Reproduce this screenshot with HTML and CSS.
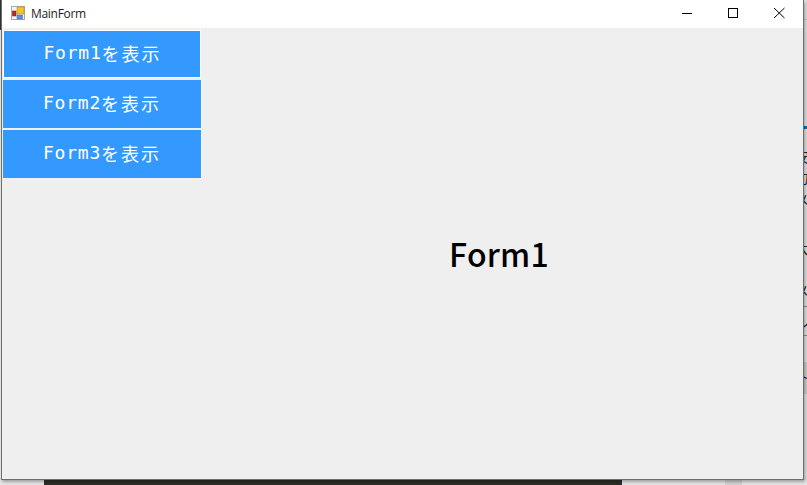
FILE: index.html
```html
<!DOCTYPE html>
<html lang="ja">
<head>
<meta charset="utf-8">
<title>MainForm</title>
<link rel="stylesheet" href="styles.css">
</head>
<body>
<div class="desktop">
  <div class="edge"></div>
  <div class="bottom-page">
    <div class="dark-bar"></div>
    <div class="grey-tab"></div>
  </div>
  <div class="side-page">
    <div class="hr r0"></div>
    <div class="blue-rule"></div>
    <p class="frag f1">安</p>
    <p class="frag f2">力</p>
    <p class="frag f3">メ</p>
    <p class="frag f4">大</p>
    <p class="frag f5">メ</p>
    <div class="hr r1"></div>
    <p class="frag f6">ル</p>
    <div class="hr r2"></div>
    <div class="shade"><p class="frag f7">ト</p></div>
  </div>
  <div class="window">
    <header class="titlebar">
      <svg class="app-icon" width="14" height="14" viewBox="0 0 14 14">
        <rect x="0.5" y="0.5" width="13" height="13" fill="#f4f4f4" stroke="#a8a8a8"/>
        <rect x="6" y="1" width="7" height="7" fill="#f5c32c" stroke="#b98a1a" stroke-width="0.6"/>
        <rect x="1.5" y="5" width="3.500" height="5" fill="#b5291f" stroke="#7d1d16" stroke-width="0.5"/>
        <rect x="6" y="9" width="5.500" height="4" fill="#5b8fe0" stroke="#3c68ad" stroke-width="0.5"/>
      </svg>
      <span class="title">MainForm</span>
      <div class="controls">
        <svg class="ctl" width="46" height="28" viewBox="0 0 46 28"><path d="M18 13.500h10" stroke="#000" fill="none"/></svg>
        <svg class="ctl" width="46" height="28" viewBox="0 0 46 28"><rect x="18.500" y="8.500" width="9" height="9" stroke="#000" fill="none"/></svg>
        <svg class="ctl" width="46" height="28" viewBox="0 0 46 28"><path d="M18 8l10.500 10M28.500 8l-10.500 10" stroke="#000" fill="none"/></svg>
      </div>
    </header>
    <main class="client">
      <nav class="menu">
        <button class="btn btn-focus"><span class="lat">Form1</span><span class="cjk">を表示</span></button>
        <button class="btn"><span class="lat">Form2</span><span class="cjk">を表示</span></button>
        <button class="btn"><span class="lat">Form3</span><span class="cjk">を表示</span></button>
      </nav>
      <section class="panel"><span class="heading">Form1</span></section>
    </main>
  </div>
</div>
</body>
</html>
```
FILE: styles.css
```css
* { box-sizing: border-box; }
html, body { margin: 0; padding: 0; }
body { width: 807px; height: 485px; overflow: hidden; background: #efefef; }
.desktop { position: relative; width: 807px; height: 485px; overflow: hidden; background: #ececec; }
.edge { position: absolute; left: 0; top: 0; width: 1px; height: 30px; background: #333; }
.bottom-page { position: absolute; left: 0; right: 0; bottom: 0; height: 6px; display: flex; background: #e6e6e6; }
.dark-bar { margin-left: 44px; width: 578px; height: 6px; background: #2e2e28; }
.grey-tab { margin-left: 103px; width: 17px; height: 6px; background: #d4d4d4; }
.side-page { position: absolute; right: 0; top: 0; width: 27px; height: 480px; background: #dedede; padding-top: 19px; font-family: "Noto Sans CJK JP", sans-serif; color: #222; }
.blue-rule { height: 3px; margin-top: 106px; background: #0a70a8; }
.frag { margin: 0; height: 20px; padding-left: 15px; font-size: 14px; line-height: 20px; white-space: nowrap; overflow: hidden; }
.f1 { margin-top: 17px; }
.f2 { margin-top: 1px; }
.f3 { margin-top: 2px; }
.f4 { margin-top: 29px; }
.f5 { margin-top: 22px; }
.hr { height: 1px; background: #8c8c8c; }
.r0 { background: #c4c4c4; }
.r1 { margin-top: 6px; }
.f6 { margin-top: 4px; }
.r2 { margin-top: 4px; }
.shade { margin-top: 26px; height: 32px; padding-top: 4px; background: #c8c8c8; }
.window { position: absolute; left: 1px; top: 0; width: 803px; height: 480px; border: 1px solid #6e6e6e; border-top: 0; background: #efefef; box-shadow: 1px 2px 3px rgba(0,0,0,.3); display: flex; flex-direction: column; }
.titlebar { height: 28px; flex: none; background: #fff; display: flex; align-items: center; padding-left: 9px; }
.app-icon { flex: none; margin-top: -2px; }
.title { margin-left: 6px; font: 12px/16px "Open Sans", sans-serif; letter-spacing: -.3px; color: #1c1c1c; margin-top: -1px; }
.controls { margin-left: auto; display: flex; margin-right: 1px; }
.ctl { display: block; }
.client { flex: 1; display: flex; min-height: 0; }
.menu { flex: none; width: 199px; margin-left: 1px; padding-top: 2px; display: flex; flex-direction: column; gap: 2px; }
.btn { width: 199px; height: 48px; padding: 0 2px 0 0; border: 0; border-right: 1px solid #fff; background: #3399ff; color: #fff; display: flex; align-items: center; justify-content: center; }
.btn-focus { border: 1px solid #fff; width: 198px; padding: 0 1px 0 0; }
.lat { font: 18px/24px "DejaVu Sans Mono", monospace; letter-spacing: .8px; margin-bottom: 2px; }
.cjk { font: 18px/24px "Noto Sans CJK JP", sans-serif; letter-spacing: 2px; margin-right: -2px; margin-bottom: 2px; }
.panel { flex: 1; display: flex; justify-content: center; align-items: center; padding: 0 5px 0 0; }
.heading { font: 500 32px/40px "Noto Sans CJK JP", sans-serif; letter-spacing: .2px; color: #000; margin-top: -2px; margin-left: -2px; }
```
